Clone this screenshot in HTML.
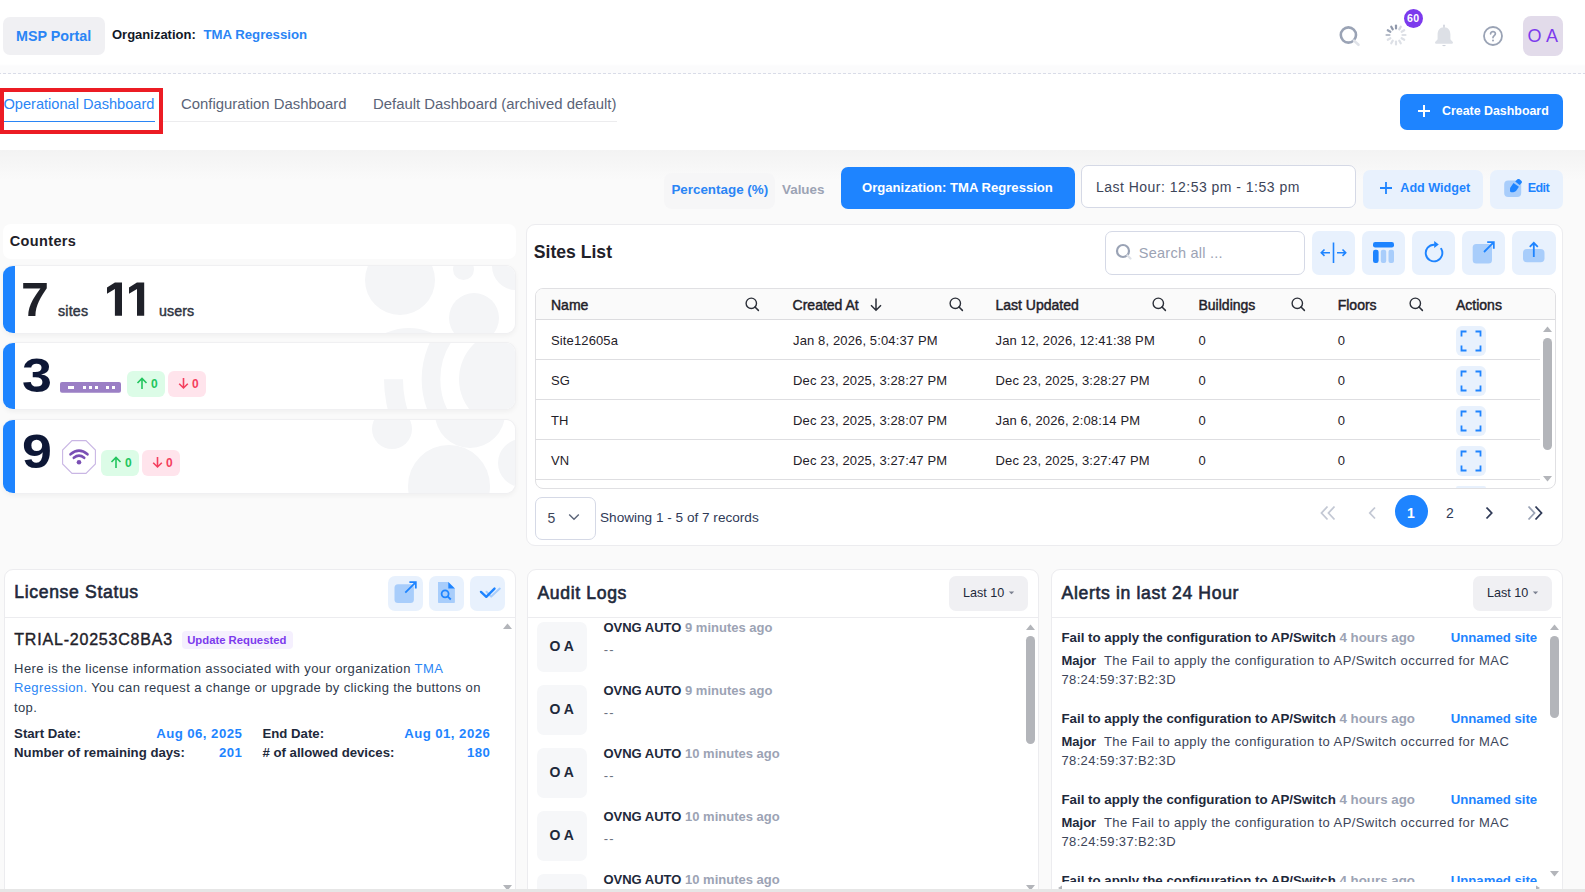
<!DOCTYPE html>
<html><head><meta charset="utf-8">
<style>
*{box-sizing:border-box;margin:0;padding:0}
html,body{width:1585px;height:892px;overflow:hidden;font-family:"Liberation Sans",sans-serif;color:#1f2129}
body{position:relative;background:#fafafa}
.a{position:absolute}
.t{position:absolute;white-space:nowrap;line-height:1}
.b{font-weight:bold}
svg{position:absolute;overflow:visible}
.hdr{left:0;top:0;width:1585px;height:74px;background:linear-gradient(#fff 0,#fff 64px,#fbfbfc 66px,#fbfbfc 73px)}
.dash{left:0;top:73px;width:1585px;height:1px;background:repeating-linear-gradient(90deg,#d9dce8 0 3px,transparent 3px 5px);background-position:3px 0}
.tabs{left:0;top:74px;width:1585px;height:76px;background:#fff}
.gray{left:0;top:150px;width:1585px;height:742px;background:linear-gradient(#f3f3f3 0,#fafafa 30px,#fafafa 100%)}
.panel{position:absolute;background:#fff;border:1px solid #ececef;border-radius:9px}
.lb{position:absolute;background:#e8f1fd;border-radius:7px}
.card{position:absolute;left:3px;width:513px;background:#fff;border-radius:10px;overflow:hidden;box-shadow:0 2px 5px rgba(0,0,0,.045);border:1px solid #f0f0f2;border-left:none}
.card .bar{position:absolute;left:0;top:-1px;bottom:-1px;width:12px;background:#1e84ff}
.circ{position:absolute;border-radius:50%;background:#f4f5f7}
.gb{position:absolute;background:#dcfce7;border-radius:6px}
.rb{position:absolute;background:#ffe4ec;border-radius:6px}
.hl{position:absolute;height:1px;background:#e2e2e5}
.tb{font-size:13px;color:#1f2129;letter-spacing:0.13px}
.th{font-size:14px;font-weight:normal;color:#1f2129;-webkit-text-stroke:0.45px #1f2129}
.lc{font-size:13.2px;font-weight:bold;color:#1e293b}
.lv{font-size:13.2px;font-weight:bold;color:#1e84ff;letter-spacing:0.45px}
.ph{font-size:17.6px;font-weight:bold;color:#1e293b}
.ph2{font-size:17.6px;font-weight:normal;color:#1e293b;-webkit-text-stroke:0.6px #1e293b;letter-spacing:0.65px}
.av{position:absolute;left:537px;width:50px;height:50px;background:#f6f7f9;border-radius:7px}
.sb{position:absolute;background:#b3b5ba;border-radius:5px}
</style></head><body>
<div class="a hdr"></div>
<div class="a dash"></div>
<div class="a tabs"></div>
<div class="a gray"></div>

<!-- ===== header ===== -->
<div class="a" style="left:3px;top:17px;width:102px;height:38px;background:#f0f0f3;border-radius:7px"></div>
<div class="t b" style="left:16px;top:28.8px;font-size:14.3px;color:#2a85f5">MSP Portal</div>
<div class="t b" style="left:112px;top:27.8px;font-size:13px;color:#111827">Organization:</div>
<div class="t b" style="left:203.5px;top:28.3px;font-size:13.2px;color:#2a85f5">TMA Regression</div>

<!-- search icon -->
<svg style="left:1335px;top:22px" width="30" height="30" viewBox="0 0 30 30"><circle cx="13.4" cy="13" r="7.6" fill="none" stroke="#9aa3b5" stroke-width="2.6"/><line x1="19" y1="18.6" x2="23.5" y2="22.8" stroke="#dfe2e8" stroke-width="2.6" stroke-linecap="round"/></svg>
<!-- spinner -->
<svg style="left:1384px;top:23px" width="24" height="24" viewBox="0 0 24 24">
<g stroke-width="2.2" stroke-linecap="round">
<line x1="12" y1="2.5" x2="12" y2="5.5" stroke="#8f98ab"/>
<line x1="16.75" y1="3.77" x2="15.25" y2="6.37" stroke="#d3d7df"/>
<line x1="20.23" y1="7.25" x2="17.63" y2="8.75" stroke="#dde0e6"/>
<line x1="21.5" y1="12" x2="18.5" y2="12" stroke="#dde0e6"/>
<line x1="20.23" y1="16.75" x2="17.63" y2="15.25" stroke="#dde0e6"/>
<line x1="16.75" y1="20.23" x2="15.25" y2="17.63" stroke="#dde0e6"/>
<line x1="12" y1="21.5" x2="12" y2="18.5" stroke="#dde0e6"/>
<line x1="7.25" y1="20.23" x2="8.75" y2="17.63" stroke="#dde0e6"/>
<line x1="3.77" y1="16.75" x2="6.37" y2="15.25" stroke="#dde0e6"/>
<line x1="2.5" y1="12" x2="5.5" y2="12" stroke="#b9bfcb"/>
<line x1="3.77" y1="7.25" x2="6.37" y2="8.75" stroke="#9aa3b5"/>
<line x1="7.25" y1="3.77" x2="8.75" y2="6.37" stroke="#8f98ab"/>
</g></svg>
<div class="a" style="left:1404px;top:9px;width:19px;height:19px;border-radius:50%;background:#7c3aed"></div>
<div class="t b" style="left:1406.9px;top:12.8px;font-size:10.6px;color:#fff;letter-spacing:0.5px">60</div>
<!-- bell -->
<svg style="left:1432px;top:24px" width="24" height="24" viewBox="0 0 24 24"><path d="M12 1.2 L12 3.5" stroke="#cfd3dc" stroke-width="1.6" stroke-linecap="round"/><path d="M12 3.2 C7.6 3.2 5.6 6.8 5.6 10.5 L5.6 15 C5.6 16.6 3 17.2 3 18.6 C3 19.6 3.6 19.8 4.6 19.8 L19.4 19.8 C20.4 19.8 21 19.6 21 18.6 C21 17.2 18.4 16.6 18.4 15 L18.4 10.5 C18.4 6.8 16.4 3.2 12 3.2Z" fill="#dde0e6"/><path d="M10 21 Q12 23.5 14 21Z" fill="#cfd3dc"/></svg>
<!-- help -->
<svg style="left:1483px;top:26px" width="20" height="20" viewBox="0 0 20 20"><circle cx="10" cy="10" r="9" fill="none" stroke="#9aa3b5" stroke-width="1.8"/><path d="M7.6 7.8 C7.6 5 12.4 5 12.4 7.8 C12.4 9.6 10 9.6 10 11.6" fill="none" stroke="#9aa3b5" stroke-width="1.7" stroke-linecap="round"/><circle cx="10" cy="14.4" r="1" fill="#9aa3b5"/></svg>
<!-- avatar -->
<div class="a" style="left:1523px;top:16px;width:40px;height:40px;background:#e2dbea;border-radius:8px"></div>
<div class="t" style="left:1527.5px;top:26.6px;font-size:18px;color:#7c3aed;letter-spacing:0.2px">O A</div>

<!-- ===== tabs ===== -->
<div class="t" style="left:3.5px;top:97.4px;font-size:14.6px;color:#2a85f5">Operational Dashboard</div>
<div class="t" style="left:181px;top:97.4px;font-size:14.9px;color:#5b6478">Configuration Dashboard</div>
<div class="t" style="left:373px;top:97.4px;font-size:14.9px;color:#5b6478">Default Dashboard (archived default)</div>
<div class="a" style="left:163px;top:121px;width:454px;height:1px;background:#ececee"></div>
<div class="a" style="left:4px;top:120.6px;width:151px;height:1.6px;background:#2a85f5"></div>
<div class="a" style="left:0;top:88px;width:163px;height:46px;border:4.5px solid #ec1c24"></div>

<div class="a" style="left:1400px;top:94px;width:163px;height:36px;background:#1e84ff;border-radius:7px"></div>
<svg style="left:1417px;top:104px" width="14" height="14" viewBox="0 0 14 14"><path d="M7 1V13M1 7H13" stroke="#fff" stroke-width="2"/></svg>
<div class="t b" style="left:1442px;top:104.5px;font-size:12.4px;color:#fff">Create Dashboard</div>

<!-- ===== toolbar ===== -->
<div class="a" style="left:664px;top:173px;width:111px;height:36px;background:#f6f6f7;border-radius:8px"></div>
<div class="t b" style="left:671.4px;top:183.3px;font-size:13.4px;color:#2a85f5">Percentage (%)</div>
<div class="t b" style="left:782px;top:183.3px;font-size:13.4px;color:#9ca3b4">Values</div>
<div class="a" style="left:841px;top:167px;width:234px;height:42px;background:#1e84ff;border-radius:7px"></div>
<div class="t b" style="left:862px;top:180.8px;font-size:13.1px;color:#fff">Organization: TMA Regression</div>
<div class="a" style="left:1081px;top:165px;width:275px;height:43px;background:#fff;border:1px solid #d5d9e6;border-radius:7px"></div>
<div class="t" style="left:1096px;top:180px;font-size:14px;color:#3d4559;letter-spacing:0.48px">Last Hour: 12:53 pm - 1:53 pm</div>
<div class="lb" style="left:1363px;top:170px;width:120px;height:39px"></div>
<svg style="left:1379px;top:181px" width="14" height="14" viewBox="0 0 14 14"><path d="M7 1V13M1 7H13" stroke="#1e84ff" stroke-width="1.8"/></svg>
<div class="t b" style="left:1400.3px;top:182.3px;font-size:12.6px;color:#1e84ff">Add Widget</div>
<div class="lb" style="left:1490px;top:170px;width:73px;height:39px"></div>
<svg style="left:1498px;top:172px" width="30" height="30" viewBox="0 0 30 30"><rect x="6.2" y="8.4" width="17" height="16.6" rx="4" fill="#a8cdfb"/><path d="M12.1 16L15.5 11.1L20.9 14.8L18 19C17 20 15 20.4 13.3 20.3C12.3 20.2 12 19.6 12 18.6Z" fill="#1e84ff"/><path d="M17.2 9.6L19.2 7.4C19.9 6.8 20.8 6.8 21.6 7.3L23.3 8.7C24 9.3 24.1 10.2 23.6 10.9L21.6 12.9Z" fill="#1e84ff"/></svg>
<div class="t b" style="left:1527.7px;top:182.3px;font-size:12.6px;color:#1e84ff;letter-spacing:-0.6px">Edit</div>

<!-- ===== counters ===== -->
<div class="a" style="left:3px;top:224px;width:513px;height:35px;background:#fff;border-radius:8px"></div>
<div class="t b" style="left:9.8px;top:233.5px;font-size:14.5px;color:#1f2129;letter-spacing:0.35px">Counters</div>

<div class="card" style="top:265px;height:69.3px">
  <div class="circ" style="left:362px;top:-21px;width:70px;height:70px"></div>
  <div class="circ" style="left:450px;top:-7.5px;width:21px;height:21px"></div>
  <div class="circ" style="left:489px;top:-24px;width:48px;height:48px"></div>
  <div class="circ" style="left:446px;top:26.5px;width:50px;height:50px"></div>
  <div class="circ" style="left:350px;top:62px;width:112px;height:112px"></div>
  <div class="bar"></div>
</div>
<div class="t b" style="left:21.3px;top:276px;font-size:47.5px;color:#1f2129;transform:scaleX(1.06);transform-origin:0 0">7</div>
<div class="t" style="left:58px;top:303.5px;font-size:14.2px;color:#2f3542;-webkit-text-stroke:0.45px #2f3542;letter-spacing:0.2px">sites</div>
<svg style="left:0;top:0" width="200" height="330" viewBox="0 0 200 330"><path d="M107 287.6L114.9 282.6H122V315.7H114.9V288.9L107 293.8Z M129 287.6L136.9 282.6H144.2V315.7H137V288.9L129 293.8Z" fill="#1f2129"/></svg>
<div class="t" style="left:159px;top:303.5px;font-size:14.2px;color:#2f3542;-webkit-text-stroke:0.45px #2f3542;letter-spacing:0.1px">users</div>

<div class="card" style="top:342.4px;height:67.6px">
  <svg style="left:0;top:0" width="512" height="68" viewBox="0 0 512 68"><circle cx="505" cy="36.2" r="49" fill="#f4f5f7"/><circle cx="505" cy="36.2" r="77" fill="none" stroke="#f4f5f7" stroke-width="18.7"/><path d="M381 36.2A124 124 0 0 0 629 36.2H610A105 105 0 0 1 400 36.2Z" fill="#f4f5f7"/></svg>
  <div class="bar"></div>
</div>
<div class="t b" style="left:21.5px;top:351.6px;font-size:48px;color:#0d1736;transform:scaleX(1.12);transform-origin:0 0">3</div>
<svg style="left:60px;top:382px" width="61" height="11" viewBox="0 0 61 11"><rect x="0" y="0" width="61" height="10.7" rx="2" fill="#9b7fc5"/><g fill="#fff"><rect x="8" y="4" width="6" height="3"/><rect x="23" y="4" width="3" height="3"/><rect x="29" y="4" width="3" height="3"/><rect x="35" y="4" width="3" height="3"/><rect x="46" y="4" width="3" height="3"/><rect x="52" y="4" width="3" height="3"/></g></svg>
<div class="gb" style="left:127px;top:371px;width:38px;height:26px"></div>
<svg style="left:136px;top:376.5px" width="12" height="13" viewBox="0 0 12 13"><path d="M6 12V1.5M1.5 6L6 1.5L10.5 6" fill="none" stroke="#22c55e" stroke-width="1.6"/></svg>
<div class="t b" style="left:151px;top:377.5px;font-size:12px;color:#22c55e">0</div>
<div class="rb" style="left:168px;top:371px;width:38px;height:26px"></div>
<svg style="left:178px;top:377px" width="11" height="12" viewBox="0 0 11 12"><path d="M5.5 1V11M1.2 6.8L5.5 11L9.8 6.8" fill="none" stroke="#f43f5e" stroke-width="1.6"/></svg>
<div class="t b" style="left:192px;top:377.5px;font-size:12px;color:#f43f5e">0</div>

<div class="card" style="top:418.5px;height:75.3px">
  <div class="circ" style="left:369px;top:-11px;width:40px;height:40px"></div>
  <div class="circ" style="left:432px;top:-42px;width:70px;height:70px"></div>
  <div class="circ" style="left:405px;top:25px;width:82px;height:82px"></div>
  <div class="circ" style="left:495px;top:19px;width:48px;height:48px"></div>
  <div class="bar"></div>
</div>
<div class="t b" style="left:21.5px;top:427.6px;font-size:48px;color:#0d1736;transform:scaleX(1.12);transform-origin:0 0">9</div>
<svg style="left:62px;top:440px" width="34" height="34" viewBox="0 0 34 34"><path d="M10 0.6H24L33.4 10V24L24 33.4H10L0.6 24V10Z" fill="#fff" stroke="#c9b6e4" stroke-width="1.1"/><g fill="none" stroke="#7a4fb4" stroke-width="2.6" stroke-linecap="round"><path d="M8.5 14.3 Q17 7 25.5 14.3"/><path d="M11.8 17.8 Q17 13.5 22.2 17.8"/></g><circle cx="17" cy="22.2" r="2.3" fill="#7a4fb4"/></svg>
<div class="gb" style="left:101px;top:450px;width:38px;height:26px"></div>
<svg style="left:110px;top:455.5px" width="12" height="13" viewBox="0 0 12 13"><path d="M6 12V1.5M1.5 6L6 1.5L10.5 6" fill="none" stroke="#22c55e" stroke-width="1.6"/></svg>
<div class="t b" style="left:125px;top:456.5px;font-size:12px;color:#22c55e">0</div>
<div class="rb" style="left:142px;top:450px;width:38px;height:26px"></div>
<svg style="left:152px;top:456px" width="11" height="12" viewBox="0 0 11 12"><path d="M5.5 1V11M1.2 6.8L5.5 11L9.8 6.8" fill="none" stroke="#f43f5e" stroke-width="1.6"/></svg>
<div class="t b" style="left:166px;top:456.5px;font-size:12px;color:#f43f5e">0</div>

<!-- ===== sites list ===== -->
<div class="panel" style="left:526.3px;top:224.3px;width:1036.4px;height:321.5px"></div>
<div class="t ph" style="left:533.8px;top:244px;color:#1f2129">Sites List</div>
<div class="a" style="left:1105px;top:231px;width:200px;height:44px;background:#fff;border:1px solid #d5d9e6;border-radius:7px"></div>
<svg style="left:1115px;top:243px" width="18" height="18" viewBox="0 0 18 18"><circle cx="8" cy="8" r="6" fill="none" stroke="#9aa3b5" stroke-width="2.2"/><line x1="12.5" y1="12.5" x2="15.5" y2="15.5" stroke="#dfe2e8" stroke-width="2.2" stroke-linecap="round"/></svg>
<div class="t" style="left:1138.8px;top:245.8px;font-size:14.5px;color:#9ca3b4;letter-spacing:0.25px">Search all ...</div>
<div class="lb" style="left:1312px;top:231px;width:43px;height:44px"></div>
<svg style="left:1312px;top:231px" width="43" height="43" viewBox="0 0 43 43"><g fill="none" stroke="#1e84ff" stroke-width="1.6"><path d="M21.5 11.5V32"/><path d="M9.5 21.7H18M12.5 18.5L9.3 21.7L12.5 24.9"/><path d="M25 21.7H33.5M30.5 18.5L33.7 21.7L30.5 24.9"/></g></svg>
<div class="lb" style="left:1362px;top:231px;width:43px;height:44px"></div>
<svg style="left:1362px;top:231px" width="43" height="43" viewBox="0 0 43 43"><rect x="11" y="11" width="21" height="5.5" rx="2.2" fill="#1e84ff"/><rect x="11" y="18.8" width="5.6" height="13.2" rx="2.2" fill="#1e84ff"/><rect x="18.8" y="18.8" width="5.4" height="13.2" rx="2" fill="#a8cdfb"/><rect x="26.5" y="18.8" width="5.5" height="13.2" rx="2" fill="#a8cdfb"/></svg>
<div class="lb" style="left:1412px;top:231px;width:43px;height:44px"></div>
<svg style="left:1412px;top:231px" width="43" height="43" viewBox="0 0 43 43"><path d="M22 13.7A8.3 8.3 0 1 0 29.2 17.8" fill="none" stroke="#1e84ff" stroke-width="1.9" stroke-linecap="round"/><path d="M22.2 10L26.8 13.4L22.2 16.9Z" fill="#1e84ff"/></svg>
<div class="lb" style="left:1462px;top:231px;width:43px;height:44px"></div>
<svg style="left:1462px;top:231px" width="43" height="43" viewBox="0 0 43 43"><rect x="10.7" y="13" width="19.3" height="19.4" rx="3.5" fill="#a8cdfb"/><path d="M22 21 L31.8 11.2M25.2 11.2H31.8V17.8" fill="none" stroke="#1e84ff" stroke-width="1.8"/></svg>
<div class="lb" style="left:1512px;top:231px;width:44px;height:44px"></div>
<svg style="left:1512px;top:231px" width="43" height="43" viewBox="0 0 43 43"><rect x="11" y="18" width="21.5" height="13.3" rx="4" fill="#a8cdfb"/><path d="M21.8 25.9V11.8M17.8 15.8L21.8 11.8L25.8 15.8" fill="none" stroke="#1e84ff" stroke-width="1.8"/></svg>

<!-- table -->
<div class="a" style="left:534.5px;top:288px;width:1021px;height:201px;border:1px solid #e0e0e3;border-radius:8px;overflow:hidden;background:#fff">
  <div class="a" style="left:0;top:0;width:1021px;height:31px;background:#fafafa;border-bottom:1px solid #dcdcdf"></div>
</div>
<div class="t th" style="left:551px;top:297.8px">Name</div>
<div class="t th" style="left:792.6px;top:297.8px">Created At</div>
<div class="t th" style="left:995.5px;top:297.8px">Last Updated</div>
<div class="t th" style="left:1198.5px;top:297.8px">Buildings</div>
<div class="t th" style="left:1337.7px;top:297.8px">Floors</div>
<div class="t th" style="left:1456px;top:297.8px">Actions</div>
<svg style="left:745px;top:297px" width="15" height="15" viewBox="0 0 15 15"><circle cx="6.3" cy="6.3" r="5.2" fill="none" stroke="#2b2f38" stroke-width="1.4"/><line x1="10" y1="10" x2="13.4" y2="13.4" stroke="#2b2f38" stroke-width="1.5" stroke-linecap="round"/></svg>
<svg style="left:948.5px;top:297px" width="15" height="15" viewBox="0 0 15 15"><circle cx="6.3" cy="6.3" r="5.2" fill="none" stroke="#2b2f38" stroke-width="1.4"/><line x1="10" y1="10" x2="13.4" y2="13.4" stroke="#2b2f38" stroke-width="1.5" stroke-linecap="round"/></svg>
<svg style="left:1151.5px;top:297px" width="15" height="15" viewBox="0 0 15 15"><circle cx="6.3" cy="6.3" r="5.2" fill="none" stroke="#2b2f38" stroke-width="1.4"/><line x1="10" y1="10" x2="13.4" y2="13.4" stroke="#2b2f38" stroke-width="1.5" stroke-linecap="round"/></svg>
<svg style="left:1290.5px;top:297px" width="15" height="15" viewBox="0 0 15 15"><circle cx="6.3" cy="6.3" r="5.2" fill="none" stroke="#2b2f38" stroke-width="1.4"/><line x1="10" y1="10" x2="13.4" y2="13.4" stroke="#2b2f38" stroke-width="1.5" stroke-linecap="round"/></svg>
<svg style="left:1408.8px;top:297px" width="15" height="15" viewBox="0 0 15 15"><circle cx="6.3" cy="6.3" r="5.2" fill="none" stroke="#2b2f38" stroke-width="1.4"/><line x1="10" y1="10" x2="13.4" y2="13.4" stroke="#2b2f38" stroke-width="1.5" stroke-linecap="round"/></svg>
<svg style="left:869px;top:297px" width="14" height="15" viewBox="0 0 14 15"><path d="M7 1.5V13M2 8.2L7 13.2L12 8.2" fill="none" stroke="#2b2f38" stroke-width="1.5"/></svg>

<div class="hl" style="left:535px;top:359px;width:1005px;background:#dedee1"></div>
<div class="hl" style="left:535px;top:399px;width:1005px;background:#dedee1"></div>
<div class="hl" style="left:535px;top:439px;width:1005px;background:#dedee1"></div>
<div class="hl" style="left:535px;top:479px;width:1005px;background:#dedee1"></div>

<div class="t tb" style="left:551px;top:333.5px">Site12605a</div>
<div class="t tb" style="left:793px;top:333.5px">Jan 8, 2026, 5:04:37 PM</div>
<div class="t tb" style="left:995.5px;top:333.5px">Jan 12, 2026, 12:41:38 PM</div>
<div class="t tb" style="left:1198.5px;top:333.5px">0</div>
<div class="t tb" style="left:1337.7px;top:333.5px">0</div>

<div class="t tb" style="left:551px;top:373.5px">SG</div>
<div class="t tb" style="left:793px;top:373.5px">Dec 23, 2025, 3:28:27 PM</div>
<div class="t tb" style="left:995.5px;top:373.5px">Dec 23, 2025, 3:28:27 PM</div>
<div class="t tb" style="left:1198.5px;top:373.5px">0</div>
<div class="t tb" style="left:1337.7px;top:373.5px">0</div>

<div class="t tb" style="left:551px;top:413.5px">TH</div>
<div class="t tb" style="left:793px;top:413.5px">Dec 23, 2025, 3:28:07 PM</div>
<div class="t tb" style="left:995.5px;top:413.5px">Jan 6, 2026, 2:08:14 PM</div>
<div class="t tb" style="left:1198.5px;top:413.5px">0</div>
<div class="t tb" style="left:1337.7px;top:413.5px">0</div>

<div class="t tb" style="left:551px;top:453.5px">VN</div>
<div class="t tb" style="left:793px;top:453.5px">Dec 23, 2025, 3:27:47 PM</div>
<div class="t tb" style="left:995.5px;top:453.5px">Dec 23, 2025, 3:27:47 PM</div>
<div class="t tb" style="left:1198.5px;top:453.5px">0</div>
<div class="t tb" style="left:1337.7px;top:453.5px">0</div>

<div class="lb" style="left:1456px;top:326px;width:30px;height:30px;border-radius:6px"></div>
<div class="lb" style="left:1456px;top:366px;width:30px;height:30px;border-radius:6px"></div>
<div class="lb" style="left:1456px;top:406px;width:30px;height:30px;border-radius:6px"></div>
<div class="lb" style="left:1456px;top:446px;width:30px;height:30px;border-radius:6px"></div>
<div class="lb" style="left:1456px;top:486px;width:30px;height:2px;border-radius:6px 6px 0 0"></div>
<svg style="left:1456px;top:326px" width="30" height="150" viewBox="0 0 30 150"><g fill="none" stroke="#1e84ff" stroke-width="1.8"><path transform="translate(0 0)" d="M5.5 10.5V5.5H10.5M19.5 5.5H24.5V10.5M24.5 19.5V24.5H19.5M10.5 24.5H5.5V19.5"/><path transform="translate(0 40)" d="M5.5 10.5V5.5H10.5M19.5 5.5H24.5V10.5M24.5 19.5V24.5H19.5M10.5 24.5H5.5V19.5"/><path transform="translate(0 80)" d="M5.5 10.5V5.5H10.5M19.5 5.5H24.5V10.5M24.5 19.5V24.5H19.5M10.5 24.5H5.5V19.5"/><path transform="translate(0 120)" d="M5.5 10.5V5.5H10.5M19.5 5.5H24.5V10.5M24.5 19.5V24.5H19.5M10.5 24.5H5.5V19.5"/></g></svg>
<!-- scrollbar -->
<svg style="left:1542px;top:325px" width="11" height="8" viewBox="0 0 11 8"><path d="M1 7H10L5.5 1.5Z" fill="#b3b5ba"/></svg>
<div class="sb" style="left:1543px;top:338px;width:9px;height:112px"></div>
<svg style="left:1542px;top:475px" width="11" height="8" viewBox="0 0 11 8"><path d="M1 1H10L5.5 6.5Z" fill="#b3b5ba"/></svg>

<!-- pagination -->
<div class="a" style="left:534.5px;top:496.5px;width:61px;height:43px;border:1px solid #d5d9e6;border-radius:7px"></div>
<div class="t" style="left:547.5px;top:510.6px;font-size:14px;color:#3d4559">5</div>
<svg style="left:568px;top:513px" width="12" height="8" viewBox="0 0 12 8"><path d="M1.2 1.5L6 6.2L10.8 1.5" fill="none" stroke="#5b6478" stroke-width="1.4"/></svg>
<div class="t" style="left:600px;top:511.4px;font-size:13.6px;color:#2f3a57">Showing 1 - 5 of 7 records</div>
<svg style="left:1319px;top:505px" width="18" height="16" viewBox="0 0 18 16"><path d="M8.5 1.5L2.5 8L8.5 14.5M15.5 1.5L9.5 8L15.5 14.5" fill="none" stroke="#c3c8d4" stroke-width="1.8"/></svg>
<svg style="left:1367px;top:505px" width="10" height="16" viewBox="0 0 10 16"><path d="M8 2.5L2.8 8L8 13.5" fill="none" stroke="#c3c8d4" stroke-width="1.8"/></svg>
<div class="a" style="left:1395px;top:495.3px;width:33px;height:33px;border-radius:50%;background:#1e84ff"></div>
<div class="t b" style="left:1407px;top:505.5px;font-size:14px;color:#fff">1</div>
<div class="t" style="left:1446px;top:505.5px;font-size:14px;color:#2f3a57">2</div>
<svg style="left:1484px;top:505px" width="10" height="16" viewBox="0 0 10 16"><path d="M2.5 2.5L7.7 8L2.5 13.5" fill="none" stroke="#2f3a57" stroke-width="1.8"/></svg>
<svg style="left:1526px;top:505px" width="18" height="16" viewBox="0 0 18 16"><path d="M2.5 1.5L8.5 8L2.5 14.5" fill="none" stroke="#9aa3b5" stroke-width="1.8"/><path d="M9.5 1.5L15.5 8L9.5 14.5" fill="none" stroke="#2f3a57" stroke-width="1.8"/></svg>

<!-- ===== license ===== -->
<div class="panel" style="left:4px;top:569px;width:511.5px;height:340px"></div>
<div class="hl" style="left:5px;top:617px;width:510px;background:#ececef"></div>
<div class="t ph2" style="left:14.3px;top:584.3px">License Status</div>
<div class="lb" style="left:388px;top:576px;width:35px;height:35px"></div>
<svg style="left:388px;top:576px" width="35" height="35" viewBox="0 0 35 35"><rect x="6.5" y="8.2" width="19.4" height="18.8" rx="3.5" fill="#a8cdfb"/><path d="M17.3 16.6 L27.6 6.3M21.4 6.2H27.8V12.6" fill="none" stroke="#1e84ff" stroke-width="1.8"/></svg>
<div class="lb" style="left:429px;top:576px;width:35px;height:35px"></div>
<svg style="left:429px;top:576px" width="35" height="35" viewBox="0 0 35 35"><path d="M9 6H19.3L25.9 12.6V26C25.9 26.6 25.5 27 24.9 27H10C9.4 27 9 26.6 9 26Z" fill="#a8cdfb"/><path d="M19.3 6L25.9 12.6H19.3Z" fill="#1e84ff"/><circle cx="16.1" cy="17.8" r="3.5" fill="none" stroke="#1e84ff" stroke-width="1.8"/><line x1="18.6" y1="20.3" x2="21.8" y2="23.5" stroke="#1e84ff" stroke-width="1.8"/></svg>
<div class="lb" style="left:470px;top:576px;width:35px;height:35px"></div>
<svg style="left:470px;top:576px" width="35" height="35" viewBox="0 0 35 35"><path d="M16.5 15.7L21.2 20.6L29.8 12.6" fill="none" stroke="#a8cdfb" stroke-width="2" stroke-linecap="round" stroke-linejoin="round"/><path d="M11 15.9L16.3 20.8L24.5 12.6" fill="none" stroke="#1e84ff" stroke-width="2.4" stroke-linecap="round" stroke-linejoin="round"/></svg>
<svg style="left:502px;top:622px" width="11" height="8" viewBox="0 0 11 8"><path d="M1 7H10L5.5 1.5Z" fill="#b3b5ba"/></svg>
<svg style="left:502px;top:884px" width="11" height="8" viewBox="0 0 11 8"><path d="M1 1H10L5.5 6.5Z" fill="#b3b5ba"/></svg>

<div class="t" style="left:14.3px;top:632.2px;font-size:16px;color:#1f2129;letter-spacing:0.8px;-webkit-text-stroke:0.4px #1f2129">TRIAL-20253C8BA3</div>
<div class="a" style="left:181.5px;top:631.4px;width:111px;height:18px;background:#f5f0fe;border-radius:4px"></div>
<div class="t b" style="left:187.2px;top:634.9px;font-size:11.3px;color:#7c3aed">Update Requested</div>
<div class="t" style="left:14.1px;top:662px;font-size:13px;color:#2f3a4c;letter-spacing:0.4px">Here is the license information associated with your organization <span style="color:#2a85f5">TMA</span></div>
<div class="t" style="left:14px;top:680.8px;font-size:13px;color:#2f3a4c;letter-spacing:0.37px"><span style="color:#2a85f5">Regression.</span> You can request a change or upgrade by clicking the buttons on</div>
<div class="t" style="left:14px;top:700.5px;font-size:13px;color:#2f3a4c;letter-spacing:0.37px">top.</div>

<div class="t lc" style="left:14.1px;top:727.4px">Start Date:</div>
<div class="t lv" style="right:1342.75px;top:727.4px">Aug 06, 2025</div>
<div class="t lc" style="left:262.5px;top:727.4px">End Date:</div>
<div class="t lv" style="right:1094.75px;top:727.4px">Aug 01, 2026</div>
<div class="t lc" style="left:14.1px;top:746.4px">Number of remaining days:</div>
<div class="t lv" style="right:1342.75px;top:746.4px">201</div>
<div class="t lc" style="left:262.5px;top:746.4px"># of allowed devices:</div>
<div class="t lv" style="right:1094.75px;top:746.4px">180</div>

<!-- ===== audit logs ===== -->
<div class="panel" style="left:526.6px;top:569px;width:512px;height:340px"></div>
<div class="hl" style="left:527.6px;top:617px;width:510px;background:#ececef"></div>
<div class="t ph2" style="left:537.4px;top:585.2px">Audit Logs</div>
<div class="a" style="left:949px;top:576px;width:79px;height:35px;background:#f0f0f3;border-radius:7px"></div>
<div class="t" style="left:963px;top:587.4px;font-size:12.6px;color:#1e293b">Last 10</div>
<svg style="left:1008px;top:591px" width="7" height="4" viewBox="0 0 7 4"><path d="M0.8 0.6H6.2L3.5 3.2Z" fill="#7b8190"/></svg>
<svg style="left:1025px;top:623px" width="11" height="8" viewBox="0 0 11 8"><path d="M1 7H10L5.5 1.5Z" fill="#b3b5ba"/></svg>
<div class="sb" style="left:1026px;top:636px;width:9px;height:108px"></div>
<svg style="left:1025px;top:884px" width="11" height="8" viewBox="0 0 11 8"><path d="M1 1H10L5.5 6.5Z" fill="#b3b5ba"/></svg>
<div class="av" style="top:622px"></div>
<div class="t b" style="left:549.5px;top:639.2px;font-size:14px;color:#1e293b">O A</div>
<div class="t b" style="left:603.4px;top:620.9px;font-size:13px;color:#1e293b">OVNG AUTO <span style="color:#9ca3b4">9 minutes ago</span></div>
<div class="t" style="left:603.8px;top:643.0px;font-size:13px;color:#6b7280;letter-spacing:1px">--</div>
<div class="av" style="top:685px"></div>
<div class="t b" style="left:549.5px;top:702.2px;font-size:14px;color:#1e293b">O A</div>
<div class="t b" style="left:603.4px;top:683.9px;font-size:13px;color:#1e293b">OVNG AUTO <span style="color:#9ca3b4">9 minutes ago</span></div>
<div class="t" style="left:603.8px;top:706.0px;font-size:13px;color:#6b7280;letter-spacing:1px">--</div>
<div class="av" style="top:748px"></div>
<div class="t b" style="left:549.5px;top:765.2px;font-size:14px;color:#1e293b">O A</div>
<div class="t b" style="left:603.4px;top:746.9px;font-size:13px;color:#1e293b">OVNG AUTO <span style="color:#9ca3b4">10 minutes ago</span></div>
<div class="t" style="left:603.8px;top:769.0px;font-size:13px;color:#6b7280;letter-spacing:1px">--</div>
<div class="av" style="top:811px"></div>
<div class="t b" style="left:549.5px;top:828.2px;font-size:14px;color:#1e293b">O A</div>
<div class="t b" style="left:603.4px;top:809.9px;font-size:13px;color:#1e293b">OVNG AUTO <span style="color:#9ca3b4">10 minutes ago</span></div>
<div class="t" style="left:603.8px;top:832.0px;font-size:13px;color:#6b7280;letter-spacing:1px">--</div>
<div class="av" style="top:874px"></div>
<div class="t b" style="left:549.5px;top:891.2px;font-size:14px;color:#1e293b">O A</div>
<div class="t b" style="left:603.4px;top:872.9px;font-size:13px;color:#1e293b">OVNG AUTO <span style="color:#9ca3b4">10 minutes ago</span></div>
<div class="t" style="left:603.8px;top:895.0px;font-size:13px;color:#6b7280;letter-spacing:1px">--</div>

<!-- ===== alerts ===== -->
<div class="panel" style="left:1050.5px;top:569px;width:512px;height:340px"></div>
<div class="hl" style="left:1052px;top:617px;width:509px;background:#ececef"></div>
<div class="t ph2" style="left:1061.5px;top:585.2px">Alerts in last 24 Hour</div>
<div class="a" style="left:1473px;top:576px;width:79px;height:35px;background:#f0f0f3;border-radius:7px"></div>
<div class="t" style="left:1487px;top:587.4px;font-size:12.6px;color:#1e293b">Last 10</div>
<svg style="left:1532px;top:591px" width="7" height="4" viewBox="0 0 7 4"><path d="M0.8 0.6H6.2L3.5 3.2Z" fill="#7b8190"/></svg>
<svg style="left:1549px;top:623px" width="11" height="8" viewBox="0 0 11 8"><path d="M1 7H10L5.5 1.5Z" fill="#b3b5ba"/></svg>
<div class="sb" style="left:1550px;top:636px;width:9px;height:82px"></div>
<svg style="left:1549px;top:870px" width="11" height="8" viewBox="0 0 11 8"><path d="M1 1H10L5.5 6.5Z" fill="#b3b5ba"/></svg>
<div class="a" style="left:1052px;top:620px;width:495px;height:262px;overflow:hidden">
<div class="t b" style="left:9.5px;top:11.0px;font-size:13.3px;color:#1e293b">Fail to apply the configuration to AP/Switch <span style="color:#9ca3b4">4 hours ago</span></div>
<div class="t b" style="left:398.7px;top:11.0px;font-size:13.2px;color:#1e84ff">Unnamed site</div>
<div class="t" style="left:9.5px;top:34.2px;font-size:13px;color:#3d4559;letter-spacing:0.42px"><b style="color:#1e293b;letter-spacing:0">Major</b>&nbsp; The Fail to apply the configuration to AP/Switch occurred for MAC</div>
<div class="t" style="left:9.5px;top:53.0px;font-size:13px;color:#3d4559;letter-spacing:0.35px">78:24:59:37:B2:3D</div>
<div class="t b" style="left:9.5px;top:92.0px;font-size:13.3px;color:#1e293b">Fail to apply the configuration to AP/Switch <span style="color:#9ca3b4">4 hours ago</span></div>
<div class="t b" style="left:398.7px;top:92.0px;font-size:13.2px;color:#1e84ff">Unnamed site</div>
<div class="t" style="left:9.5px;top:115.2px;font-size:13px;color:#3d4559;letter-spacing:0.42px"><b style="color:#1e293b;letter-spacing:0">Major</b>&nbsp; The Fail to apply the configuration to AP/Switch occurred for MAC</div>
<div class="t" style="left:9.5px;top:134.0px;font-size:13px;color:#3d4559;letter-spacing:0.35px">78:24:59:37:B2:3D</div>
<div class="t b" style="left:9.5px;top:173.0px;font-size:13.3px;color:#1e293b">Fail to apply the configuration to AP/Switch <span style="color:#9ca3b4">4 hours ago</span></div>
<div class="t b" style="left:398.7px;top:173.0px;font-size:13.2px;color:#1e84ff">Unnamed site</div>
<div class="t" style="left:9.5px;top:196.2px;font-size:13px;color:#3d4559;letter-spacing:0.42px"><b style="color:#1e293b;letter-spacing:0">Major</b>&nbsp; The Fail to apply the configuration to AP/Switch occurred for MAC</div>
<div class="t" style="left:9.5px;top:215.0px;font-size:13px;color:#3d4559;letter-spacing:0.35px">78:24:59:37:B2:3D</div>
<div class="t b" style="left:9.5px;top:254.0px;font-size:13.3px;color:#1e293b">Fail to apply the configuration to AP/Switch <span style="color:#9ca3b4">4 hours ago</span></div>
<div class="t b" style="left:398.7px;top:254.0px;font-size:13.2px;color:#1e84ff">Unnamed site</div>
<div class="t" style="left:9.5px;top:277.2px;font-size:13px;color:#3d4559;letter-spacing:0.42px"><b style="color:#1e293b;letter-spacing:0">Major</b>&nbsp; The Fail to apply the configuration to AP/Switch occurred for MAC</div>
<div class="t" style="left:9.5px;top:296.0px;font-size:13px;color:#3d4559;letter-spacing:0.35px">78:24:59:37:B2:3D</div>

</div>
<svg style="left:1057px;top:885px" width="6" height="6" viewBox="0 0 6 6"><path d="M5 0.5V5.5L1 3Z" fill="#b3b5ba"/></svg>
<svg style="left:1535px;top:885px" width="6" height="6" viewBox="0 0 6 6"><path d="M1 0.5V5.5L5 3Z" fill="#b3b5ba"/></svg>
<!-- bottom bar -->
<div class="a" style="left:0;top:889px;width:1585px;height:3px;background:#e6e6e6"></div>
</body></html>
